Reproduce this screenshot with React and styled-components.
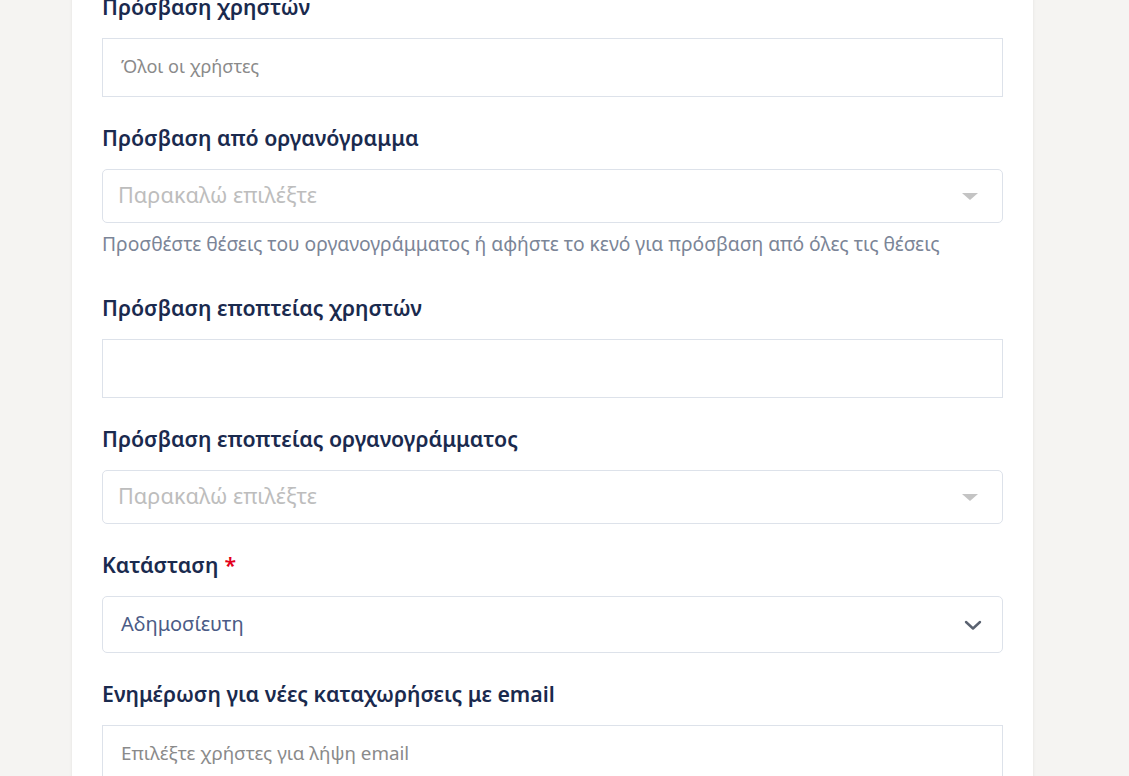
import React from "react";
import styled, { createGlobalStyle } from "styled-components";

const Global = createGlobalStyle`
  html, body { margin: 0; padding: 0; background: #f5f4f2; }
  body { font-family: "Noto Sans", "Open Sans", sans-serif; overflow: hidden; }
  * { box-sizing: border-box; }
`;

const Page = styled.div`
  width: 1129px;
  height: 776px;
  overflow: hidden;
  padding-left: 72px;
`;

const Card = styled.div`
  width: 961px;
  margin-top: -35px;
  background: #ffffff;
  box-shadow: 0 0 3px rgba(0, 0, 0, 0.08);
  padding: 30px 30px 40px 30px;
  display: flex;
  flex-direction: column;
  gap: 29px;
`;

const Field = styled.div`
  display: flex;
  flex-direction: column;
  padding-bottom: ${(p) => (p.$extra ? "11px" : "0")};
`;

const Label = styled.div`
  font-size: 21.3px;
  font-weight: 600;
  line-height: 24px;
  color: #1a2a4e;
  margin-bottom: 19px;
  white-space: nowrap;
`;

const Required = styled.span`
  color: #e3001b;
  margin-left: 6px;
`;

const TextBox = styled.div`
  height: 59px;
  border: 1px solid #dde2ea;
  background: #fff;
  display: flex;
  align-items: center;
  padding: 0 18px 3px 18px;
  font-size: ${(p) => p.$fs || 18.8}px;
  color: #8a8a8a;
`;

const Select = styled.div`
  height: ${(p) => p.$h || 54}px;
  border: 1px solid #dde2ea;
  border-radius: 5px;
  background: #fff;
  display: flex;
  align-items: center;
  justify-content: space-between;
  padding: 0 ${(p) => p.$pr || 22}px 3px ${(p) => p.$pl || 15}px;
  font-size: ${(p) => p.$fs || 21.7}px;
  color: ${(p) => p.$color || "#bdbdbd"};
`;

const Caret = styled.span`
  width: 0;
  height: 0;
  border-left: 8px solid transparent;
  border-right: 8px solid transparent;
  border-top: 7px solid #c4c4c4;
  margin: 3px 2px 0 0;
`;

const Helper = styled.div`
  margin-top: 9px;
  font-size: 19.3px;
  line-height: 24px;
  color: #7b8597;
  white-space: nowrap;
`;

const ChevronWrap = styled.span`
  display: flex;
  margin-top: 3px;
`;

const Chevron = () => (
  <ChevronWrap>
    <svg width="20" height="20" viewBox="0 0 20 20" fill="none">
      <path d="M3 7 L10 13.5 L17 7" stroke="#5a6270" strokeWidth="2.4" strokeLinecap="round" strokeLinejoin="round" />
    </svg>
  </ChevronWrap>
);

export default function App() {
  return (
    <Page>
      <Global />
      <Card>
        <Field>
          <Label>Πρόσβαση χρηστών</Label>
          <TextBox $fs={18.1}>Όλοι οι χρήστες</TextBox>
        </Field>
        <Field $extra>
          <Label>Πρόσβαση από οργανόγραμμα</Label>
          <Select>
            <span>Παρακαλώ επιλέξτε</span>
            <Caret />
          </Select>
          <Helper>Προσθέστε θέσεις του οργανογράμματος ή αφήστε το κενό για πρόσβαση από όλες τις θέσεις</Helper>
        </Field>
        <Field>
          <Label>Πρόσβαση εποπτείας χρηστών</Label>
          <TextBox />
        </Field>
        <Field>
          <Label>Πρόσβαση εποπτείας οργανογράμματος</Label>
          <Select>
            <span>Παρακαλώ επιλέξτε</span>
            <Caret />
          </Select>
        </Field>
        <Field>
          <Label>
            Κατάσταση<Required>*</Required>
          </Label>
          <Select $h={57} $pl={18} $pr={19} $fs={20} $color="#4b5b86">
            <span>Αδημοσίευτη</span>
            <Chevron />
          </Select>
        </Field>
        <Field>
          <Label>Ενημέρωση για νέες καταχωρήσεις με email</Label>
          <TextBox>Επιλέξτε χρήστες για λήψη email</TextBox>
        </Field>
      </Card>
    </Page>
  );
}
